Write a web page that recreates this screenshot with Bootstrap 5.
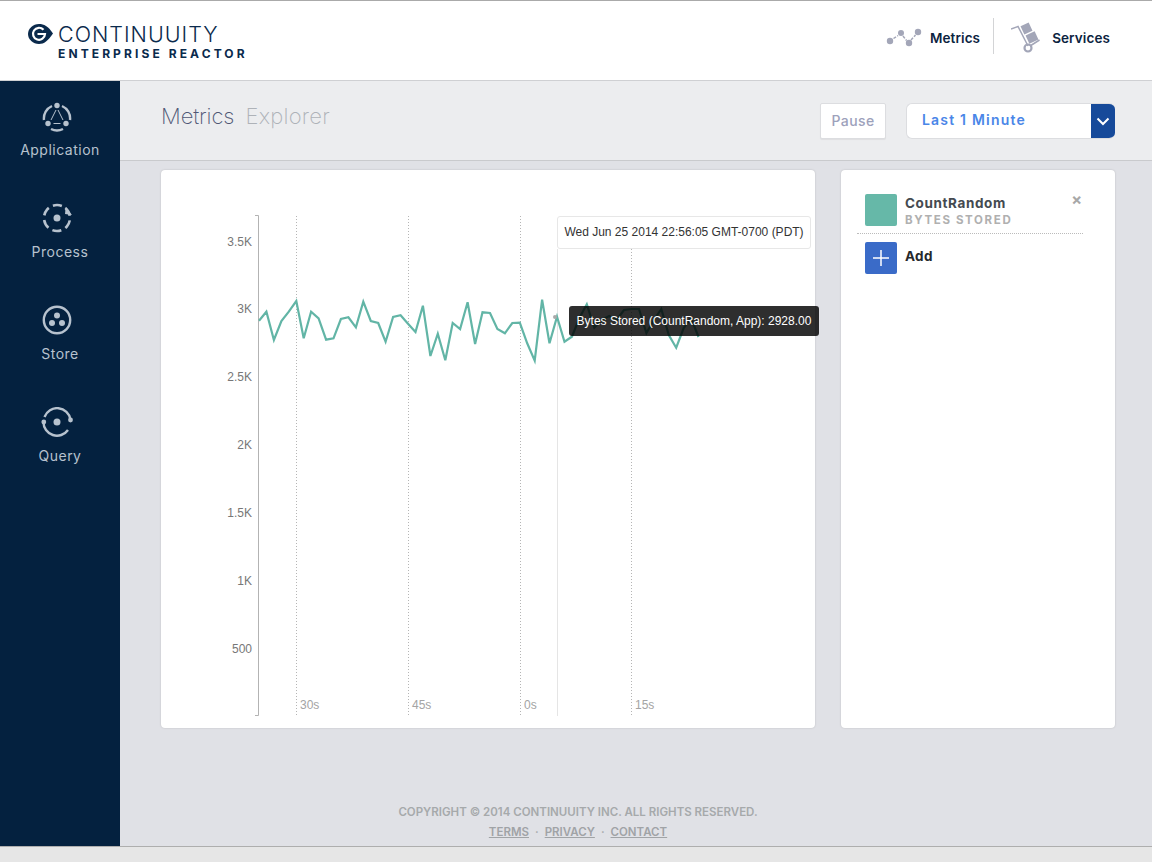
<!DOCTYPE html>
<html lang="en">
<head>
  <meta charset="UTF-8">
  <title>Continuuity - Metrics Explorer</title>
  <link href="https://cdn.jsdelivr.net/npm/bootstrap@5.3.0/dist/css/bootstrap.min.css" rel="stylesheet">
  <style>
    html, body { height: 862px; overflow: hidden; }
    body {
      font-family: Inter, "Liberation Sans", sans-serif;
      background: #e6e6e6;
      border-top: 1px solid #aaaaaa;
    }
    .top-bar { height: 80px; background: #fff; border-bottom: 1px solid #cfd0d3; }
    .logo-box { margin-left: 28px; margin-top: 22px; }
    .logo-main { font-size: 21.5px; font-weight: 300; line-height: 22px; color: #0a2a4c; letter-spacing: 1px; }
    .logo-sub { font-size: 12px; font-weight: 700; line-height: 13px; color: #0a2a4c; letter-spacing: 3.1px; margin-left: 30px; margin-top: 2px; }
    .top-nav { padding: 0 42px 5px 0; }
    .top-link { font-size: 13.5px; font-weight: 600; color: #0b2340; text-decoration: none; letter-spacing: .1px; }
    .top-sep { width: 1px; height: 36px; background: #d3d4d6; margin: 17px 17px 0 13px; }
    .truck-icon { margin-right: 11px; }
    .shell { height: 765px; }
    .side-nav { width: 120px; background: #04213f; padding-top: 20px; }
    .side-item { height: 102px; color: #b7c2ce; font-size: 14px; text-align: center; letter-spacing: .5px; text-decoration: none; display: block; }
    .side-item svg { display: block; margin: 0 0 6px 41px; }
    .main-area { background: #e0e1e6; }
    .sub-bar { height: 80px; background: #ecedef; border-bottom: 1px solid #c9cacd; padding: 22px 37px 0 41px; }
    .page-title { font-size: 22px; font-weight: 200; line-height: 26px; margin: 0; letter-spacing: -.1px; }
    .title-a { color: #4f5775; }
    .title-b { color: #aeb2b8; margin-left: 5px; letter-spacing: .25px; }
    .tool-row { column-gap: 20px; }
    .pause-btn { width: 66px; height: 36px; background: #fff; border: 1px solid #dcdde0; border-radius: 2px; color: #9da1bb; font-size: 14px; font-weight: 500; letter-spacing: .4px; padding: 0 0 2px; box-shadow: 0 1px 1px rgba(0,0,0,.06); }
    .range-pick { width: 209px; height: 36px; background: #fff; border: 1px solid #dcdde0; border-right: 0; border-radius: 6px; overflow: hidden; }
    .range-text { color: #4a86e8; font-size: 14px; font-weight: 600; letter-spacing: 1.2px; padding-left: 15px; line-height: 31px; }
    .range-caret { width: 24px; background: #164a9a; }
    .page-body { padding: 9px 37px 0 41px; gap: 26px; }
    .chart-card { width: 654px; height: 558px; border: 0; border-radius: 4px; box-shadow: 0 0 2px rgba(0,0,0,.18); }
    .legend-card { width: 274px; height: 558px; border: 0; border-radius: 4px; box-shadow: 0 0 2px rgba(0,0,0,.18); padding: 24px 32px 0 16px; }
    .chart-card svg { display: block; }
    .axis-y { font: 12px "Liberation Sans", Arial, sans-serif; fill: #777; text-anchor: end; }
    .axis-x { font: 12px "Liberation Sans", Arial, sans-serif; fill: #a4a4a4; }
    .time-tip { position: absolute; left: 396px; top: 46px; width: 254px; height: 33px; background: #fff; border: 1px solid #e7e7e7; border-radius: 3px; font: 12px/31px "Liberation Sans", Arial, sans-serif; color: #333; text-align: center; white-space: nowrap; }
    .value-tip { position: absolute; left: 408px; top: 136px; width: 250px; height: 30px; background: rgba(0,0,0,.82); border-radius: 3px; font: 12px/30px "Liberation Sans", Arial, sans-serif; color: #fff; text-align: center; white-space: nowrap; }
    .swatch { width: 32px; height: 32px; border-radius: 2px; margin-left: 8px; margin-right: 8px; flex: none; }
    .swatch-teal { background: #66b8a8; }
    .swatch-blue { background: #3a6bc8; }
    .legend-row { padding-bottom: 6px; border-bottom: 1px dotted #bbb; }
    .legend-name { font-size: 13.5px; font-weight: 700; color: #444a50; letter-spacing: .6px; line-height: 14px; margin-top: 2px; }
    .legend-kind { font-size: 11.5px; font-weight: 700; color: #b0b0b0; letter-spacing: 1.65px; line-height: 14px; margin-top: 3px; }
    .legend-close { color: #a8a8a8; font-size: 16px; font-weight: 700; line-height: 14px; margin: -2px 1px 0 0; }
    .legend-add { font-size: 13.5px; font-weight: 700; color: #26282b; letter-spacing: .3px; padding-bottom: 4px; }
    .add-row { margin-top: 8px; }
    .foot { padding: 74px 116px 0 0; text-align: center; font-size: 11.5px; font-weight: 600; color: #a6a9ab; line-height: 20px; }
    .foot a { color: #a0a3a6; }
    .foot span { margin: 0 6px; }
    .bottom-strip { height: 16px; border-top: 1px solid #aeaeae; background: #e6e6e6; }
  </style>
</head>
<body>
  <!-- Top bar -->
  <header class="top-bar d-flex justify-content-between">
    <div class="logo-box">
      <div class="d-flex">
        <svg width="26" height="22" viewBox="0 0 26 22">
          <path d="M11 1 C16 1 20 3 25 10.500 C20 18 16 21 11 21 C5 21 0 16.500 0 11 C0 5.500 5 1 11 1 Z" fill="#0a2a4c"/>
          <path d="M15.500 6.800 A6 6 0 1 0 17 11 H9.500" fill="none" stroke="#fff" stroke-width="2.200"/>
        </svg>
        <div class="logo-main ms-1">CONTINUUITY</div>
      </div>
      <div class="logo-sub">ENTERPRISE REACTOR</div>
    </div>
    <nav class="top-nav d-flex align-items-center">
      <svg width="36" height="20" viewBox="0 0 36 20" class="me-2">
        <g fill="#a3a6b8">
          <circle cx="4" cy="13" r="3.200"/><circle cx="15" cy="5" r="3"/><circle cx="23" cy="15" r="3.200"/><circle cx="32" cy="4" r="3.200"/>
        </g>
        <path d="M7.500 10.500 L12 7.500 M17 8 L20.500 12.500 M25 12 L29.500 7" stroke="#a3a6b8" stroke-width="1.500" stroke-dasharray="3 1.500"/>
      </svg>
      <a href="#" class="top-link">Metrics</a>
      <div class="top-sep align-self-start"></div>
      <svg width="30" height="32" viewBox="0 0 30 32" class="truck-icon">
        <path d="M0 7 L7 4.500 L17 24 M19 24 L28.500 18" fill="none" stroke="#a3a6b8" stroke-width="1.500"/>
        <circle cx="17" cy="26" r="3.500" fill="none" stroke="#a3a6b8" stroke-width="2.200"/>
        <rect x="11" y="2" width="9" height="9" transform="rotate(-25 15.500 6.500)" fill="#a3a6b8"/>
        <rect x="16" y="11" width="10" height="9" transform="rotate(-25 21 15.500)" fill="#a3a6b8"/>
      </svg>
      <a href="#" class="top-link">Services</a>
    </nav>
  </header>

  <div class="shell d-flex">
    <!-- Sidebar -->
    <aside class="side-nav flex-shrink-0">
      <a href="#" class="side-item">
        <svg width="32" height="32" viewBox="0 0 32 32" fill="none" stroke="#b7c2ce" stroke-width="2.400">
          <path d="M11 5 A13.500 13.500 0 0 0 3 19 M21 5 A13.500 13.500 0 0 1 29 19 M10 28 A13.500 13.500 0 0 0 22 28"/>
          <g fill="#b7c2ce" stroke="none"><circle cx="16" cy="4.500" r="2.700"/><circle cx="7" cy="22.500" r="2.700"/><circle cx="25" cy="22.500" r="2.700"/></g>
          <path d="M15 9 L10 19 M17 9 L22 19 M12.500 22.500 H19.500" stroke-width="1"/>
        </svg>
        Application
      </a>
      <a href="#" class="side-item">
        <svg width="32" height="32" viewBox="0 0 32 32" fill="none">
          <circle cx="16" cy="15" r="13" stroke="#b7c2ce" stroke-width="2.600" stroke-dasharray="9 4.610" transform="rotate(-50 16 15)"/>
          <path d="M24.700 4 L31 12 L24 11 Z" fill="#b7c2ce"/>
          <circle cx="16" cy="15" r="3.500" fill="#b7c2ce"/>
        </svg>
        Process
      </a>
      <a href="#" class="side-item">
        <svg width="32" height="32" viewBox="0 0 32 32" fill="none">
          <circle cx="16" cy="15" r="13.200" stroke="#b7c2ce" stroke-width="2.400"/>
          <g fill="#b7c2ce"><circle cx="16" cy="10.500" r="3"/><circle cx="11" cy="18" r="3"/><circle cx="21" cy="18" r="3"/></g>
        </svg>
        Store
      </a>
      <a href="#" class="side-item">
        <svg width="32" height="32" viewBox="0 0 32 32" fill="none" stroke="#b7c2ce" stroke-width="2.400">
          <path d="M3.500 10 A13.500 13.500 0 0 1 29.500 12.500 M2.500 15 A13.500 13.500 0 0 0 27 23"/>
          <circle cx="29.500" cy="13" r="2.400" fill="#b7c2ce" stroke="none"/>
          <circle cx="2.800" cy="15" r="2.400" fill="#b7c2ce" stroke="none"/>
          <circle cx="16" cy="15" r="3.500" fill="#b7c2ce" stroke="none"/>
        </svg>
        Query
      </a>
    </aside>

    <main class="main-area flex-grow-1">
      <div class="sub-bar d-flex justify-content-between align-items-start">
        <h1 class="page-title"><span class="title-a">Metrics</span> <span class="title-b">Explorer</span></h1>
        <div class="tool-row d-flex">
          <button type="button" class="pause-btn">Pause</button>
          <div class="range-pick d-flex justify-content-between">
            <span class="range-text">Last 1 Minute</span>
            <span class="range-caret d-flex align-items-center justify-content-center">
              <svg width="14" height="9" viewBox="0 0 14 9"><path d="M1.500 1.500 L7 7 L12.500 1.500" fill="none" stroke="#fff" stroke-width="2"/></svg>
            </span>
          </div>
        </div>
      </div>

      <div class="page-body d-flex">
        <!-- Chart -->
        <div class="card chart-card position-relative">
          <svg id="chart" width="654" height="558" viewBox="161 170 654 558">
            <g stroke="#b3b3b3" stroke-width="1" fill="none"><path d="M255 215.500 H258.500 V715.500 H255"/></g>
            <g stroke="#b5b5b5" stroke-width="1" stroke-dasharray="1 2">
              <path d="M296.500 216 V716 M408.500 216 V716 M520.500 216 V716 M631.500 249 V716"/>
            </g>
            <path d="M557.500 249 V716" stroke="#e5e5e5"/>
            <g class="axis-y">
              <text x="252" y="246">3.5K</text><text x="252" y="313">3K</text><text x="252" y="381">2.5K</text>
              <text x="252" y="449">2K</text><text x="252" y="517">1.5K</text><text x="252" y="585">1K</text><text x="252" y="653">500</text>
            </g>
            <g class="axis-x">
              <text x="300" y="709">30s</text><text x="412" y="709">45s</text><text x="524" y="709">0s</text><text x="635" y="709">15s</text>
            </g>
            <polyline id="series" fill="none" stroke="#62b5a6" stroke-width="2.200" stroke-linejoin="miter"/>
            <circle cx="555" cy="317" r="2" fill="#aaa"/>
          </svg>
          <div class="time-tip">Wed Jun 25 2014 22:56:05 GMT-0700 (PDT)</div>
          <div class="value-tip">Bytes Stored (CountRandom, App): 2928.00</div>
        </div>

        <!-- Legend -->
        <div class="card legend-card">
          <div class="legend-row d-flex">
            <div class="swatch swatch-teal"></div>
            <div class="flex-grow-1">
              <div class="legend-name">CountRandom</div>
              <div class="legend-kind">BYTES STORED</div>
            </div>
            <div class="legend-close">×</div>
          </div>
          <div class="add-row d-flex align-items-center">
            <div class="swatch swatch-blue d-flex align-items-center justify-content-center">
              <svg width="16" height="16" viewBox="0 0 16 16"><path d="M8 0 V16 M0 8 H16" stroke="#fff" stroke-width="1.500"/></svg>
            </div>
            <div class="legend-add">Add</div>
          </div>
        </div>
      </div>

      <footer class="foot">
        <div>COPYRIGHT © 2014 CONTINUUITY INC. ALL RIGHTS RESERVED.</div>
        <div><a href="#">TERMS</a><span>·</span><a href="#">PRIVACY</a><span>·</span><a href="#">CONTACT</a></div>
      </footer>
    </main>
  </div>
  <div class="bottom-strip"></div>

  <script>
    const ys = [320.7,311.7,340,321,311.7,301,338.3,311.7,318.3,339.7,338.3,319,317.3,327.3,301.7,321,323,341.7,317,315.3,
                323.7,332,305.7,356,333.7,360.3,323,329,302.3,344,312.3,313,329,333.3,323,322.7,343.3,360.7,
                299.7,343.3,316.7,341.7,336.7,318,304.3,327.7,320,316,320,310,309,309,333,320,309,335,347.7,328,318,337];
    const pts = ys.map((y, i) => (259 + i * 7.45).toFixed(1) + "," + y);
    document.getElementById("series").setAttribute("points", pts.join(" "));
  </script>
  <script src="https://cdn.jsdelivr.net/npm/bootstrap@5.3.0/dist/js/bootstrap.bundle.min.js"></script>
</body>
</html>
